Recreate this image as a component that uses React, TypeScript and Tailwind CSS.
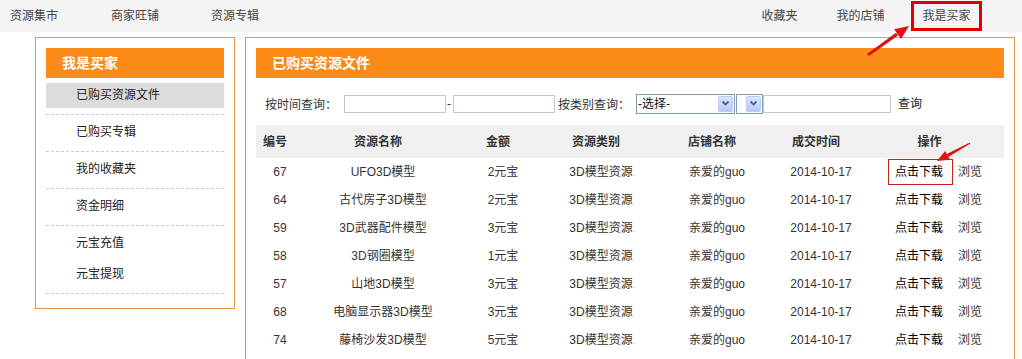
import React from "react";

const rows: [string, string, string][] = [
  ["67", "UFO3D模型", "2元宝"],
  ["64", "古代房子3D模型", "2元宝"],
  ["59", "3D武器配件模型", "3元宝"],
  ["58", "3D钢圈模型", "1元宝"],
  ["57", "山地3D模型", "3元宝"],
  ["68", "电脑显示器3D模型", "3元宝"],
  ["74", "藤椅沙发3D模型", "5元宝"],
];

const headers = ["编号", "资源名称", "金额", "资源类别", "店铺名称", "成交时间", "操作"];

function DropBtn() {
  return (
    <span className="flex h-[16px] w-[15px] items-center justify-center rounded-[2px] border border-[#b9cbf3] bg-gradient-to-b from-[#dce6fd] to-[#b5c9f6]">
      <svg width="9" height="7" viewBox="0 0 9 7">
        <polyline points="1.5,1.5 4.5,4.5 7.5,1.5" fill="none" stroke="#4d6185" strokeWidth="1.8" />
      </svg>
    </span>
  );
}

export default function App() {
  return (
    <div
      className="relative h-[359px] w-[1022px] overflow-hidden bg-white text-[12px] text-[#333]"
      style={{ fontFamily: '"Liberation Sans", "Noto Sans CJK SC", sans-serif' }}
    >
      {/* top nav */}
      <div className="flex h-[32px] items-center bg-[#f4f4f4] text-[#444]">
        <div className="flex gap-[52px] pl-[10px]">
          <span>资源集市</span>
          <span className="ml-[1px]">商家旺铺</span>
          <span>资源专辑</span>
        </div>
        <div className="ml-auto mr-[40px] flex items-center">
          <span className="w-[71px] text-center">收藏夹</span>
          <span className="ml-[10px] w-[71px] text-center">我的店铺</span>
          <span className="ml-[15px] flex h-[30px] w-[71px] items-center justify-center border-[3px] border-[#e00000]">
            我是买家
          </span>
        </div>
      </div>

      {/* body */}
      <div className="mt-[5px] flex items-start gap-[10px] pl-[35px]">
        {/* sidebar */}
        <div className="w-[200px] border border-[#dd9b4b] px-[10px] pb-[14px] pt-[10px]">
          <div className="h-[30px] bg-[#fb8a17] pl-[16px] text-[14px] font-bold leading-[30px] text-white">
            我是买家
          </div>
          <ul>
            {[
              { t: "已购买资源文件", active: true, border: true },
              { t: "已购买专辑", border: true },
              { t: "我的收藏夹", border: true },
              { t: "资金明细", border: true },
              { t: "元宝充值", border: false, h: "h-[31px]" },
              { t: "元宝提现", border: true },
            ].map((it) => (
              <li
                key={it.t}
                className={`${it.h ?? "h-[37px]"} pt-[5px] ${
                  it.border ? "border-b border-dashed border-[#cccccc]" : ""
                }`}
              >
                <div
                  className={`h-[25px] pl-[30px] leading-[25px] text-[#222] ${
                    it.active ? "bg-[#dcdcdc]" : ""
                  }`}
                >
                  {it.t}
                </div>
              </li>
            ))}
          </ul>
        </div>

        {/* main panel */}
        <div className="h-[340px] w-[770px] border border-[#dd9b4b] px-[10px] pt-[10px]">
          <div className="h-[30px] bg-[#fb8a17] pl-[16px] text-[14px] font-bold leading-[30px] text-white">
            已购买资源文件
          </div>

          {/* filter row */}
          <div className="mt-[15px] flex h-[21px] items-center pl-[9px] text-[#333]">
            <span className="mt-[2px]">按时间查询：</span>
            <span className="ml-[7px] mt-[1px] h-[18px] w-[102px] border border-[#c6c6c6]" />
            <span className="ml-[1px] mr-[2px]">-</span>
            <span className="mt-[1px] h-[18px] w-[102px] border border-[#c6c6c6]" />
            <span className="ml-[3px] mt-[2px]">按类别查询：</span>
            <span className="ml-[6px] flex h-[20px] w-[99px] items-center justify-between border border-[#7f9db9] bg-white pl-[1px] pr-[1px] text-[#111]">
              <span>-选择-</span>
              <DropBtn />
            </span>
            <span className="ml-[1px] flex h-[20px] w-[27px] items-center justify-end border border-[#7f9db9] bg-white pr-[1px]">
              <DropBtn />
            </span>
            <span className="mt-[1px] h-[18px] w-[128px] border border-[#c6c6c6]" />
            <span className="ml-[7px] text-[#222]">查询</span>
          </div>

          {/* table */}
          <div className="mt-[11px]">
            <div className="grid h-[33px] grid-cols-[48px_158px_82px_114px_118px_90px_137px] items-center bg-[#f0f0f0] font-bold text-[#333]">
              {headers.map((h) => (
                <div key={h} className="pr-[10px] text-center">
                  {h}
                </div>
              ))}
            </div>
            {rows.map((r, i) => (
              <div
                key={r[0]}
                className="grid h-[28px] grid-cols-[48px_158px_82px_114px_118px_90px_137px] items-center text-center text-[#333]"
              >
                <div>{r[0]}</div>
                <div>{r[1]}</div>
                <div>{r[2]}</div>
                <div>3D模型资源</div>
                <div>亲爱的guo</div>
                <div>2014-10-17</div>
                <div className="pl-[29px] text-left">
                  <span className="relative text-[#000]">
                    点击下载
                    {i === 0 && (
                      <span className="absolute bottom-[-6px] left-[-7px] right-[-10px] top-[-6px] border border-[#c81e1e]" />
                    )}
                  </span>
                  <span className="ml-[15px]">浏览</span>
                </div>
              </div>
            ))}
          </div>
        </div>
      </div>

      {/* annotation arrows */}
      <svg className="pointer-events-none absolute left-0 top-0" width="1022" height="359">
        <polygon points="867,54 869,56 898,35.5 896,32.7" fill="#e01010" />
        <polygon points="909,26 901.1,39 894.1,29.2" fill="#e01010" />
        <polygon points="970,142.6 970.4,143.4 948.3,157 946.7,154" fill="#e01010" />
        <polygon points="937,161 949.9,159.7 945.1,150.9" fill="#e01010" />
      </svg>
    </div>
  );
}
